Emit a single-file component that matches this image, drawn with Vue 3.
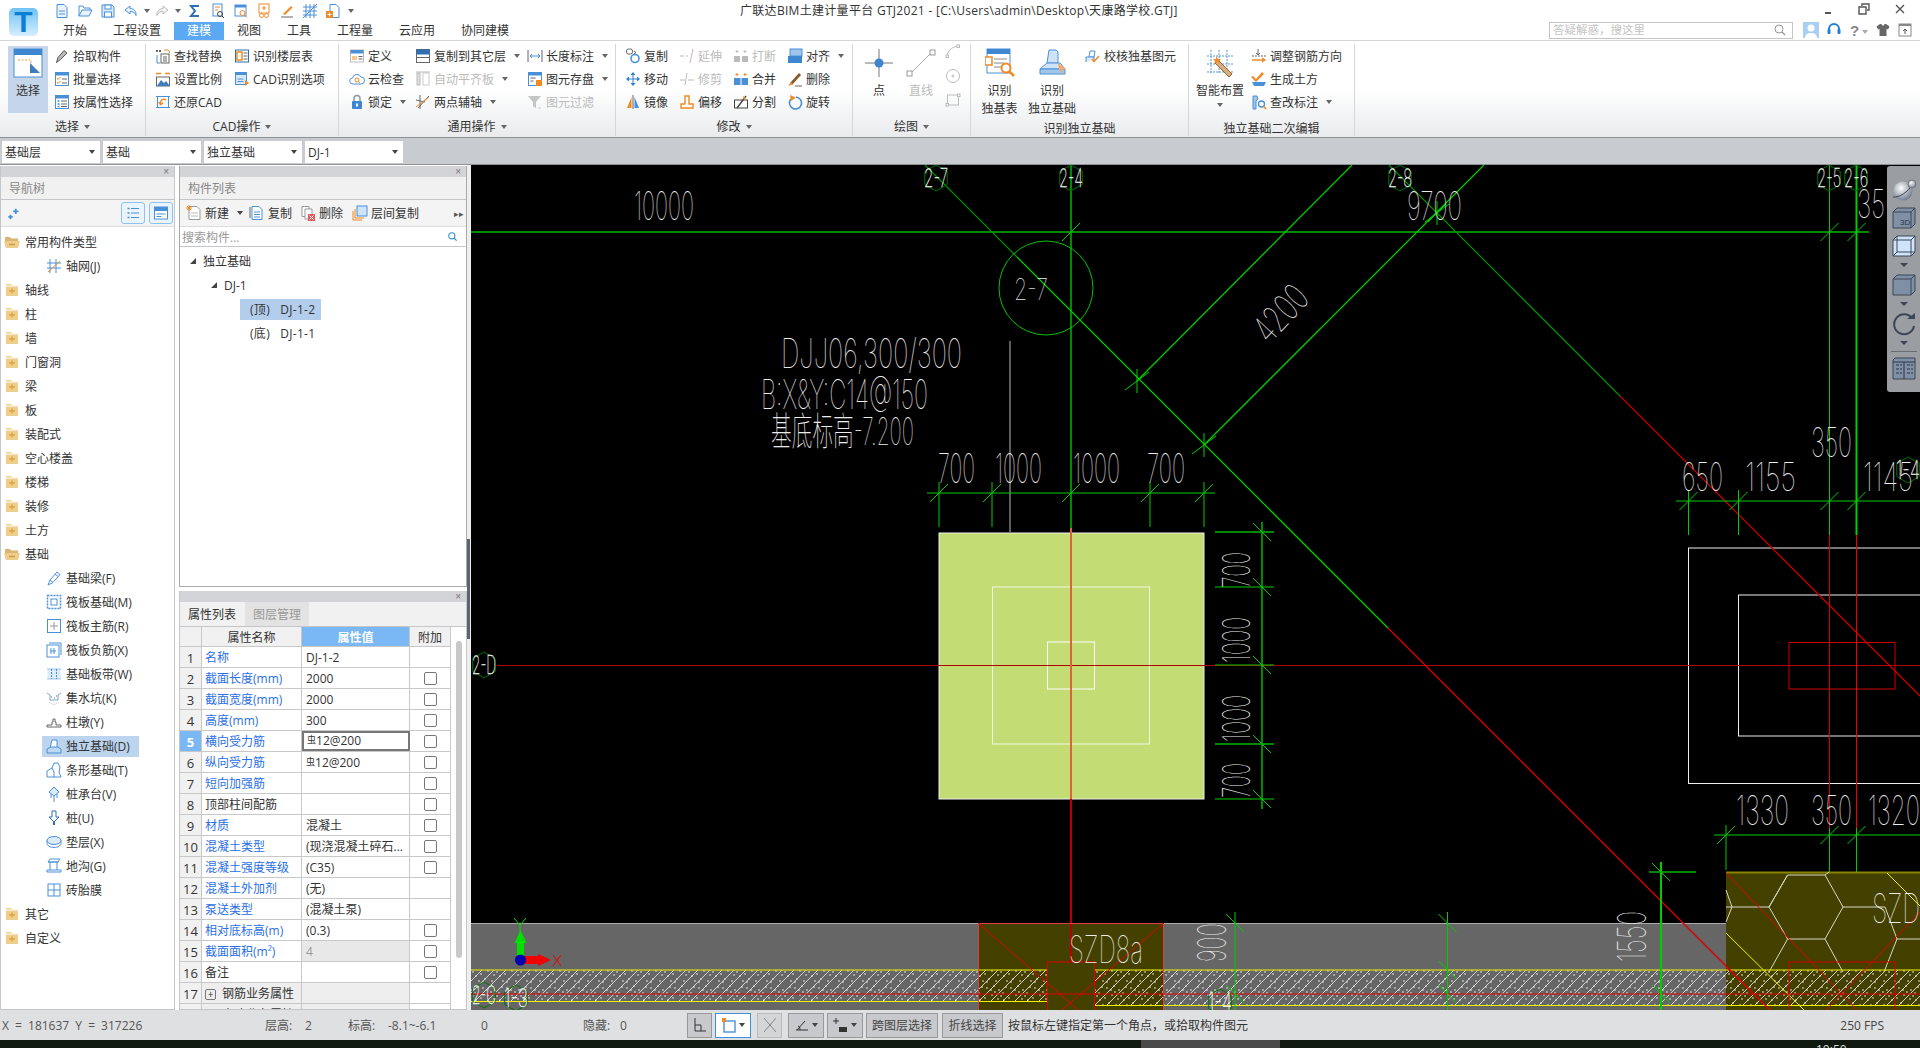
<script setup>
const B = "#4a90d9";
const O = "#f08a24";
const G = "#666";
const D = "#444";

const win = (h = "") =>
  `<rect x="1.5" y="1.5" width="13" height="13" fill="#fff" stroke="${B}"/><rect x="1.5" y="1.5" width="13" height="3" fill="${B}"/>${h}`;

const icons = {
  file: `<path d="M3 1.5h7l3 3v10H3z" fill="#eaf3fc" stroke="${B}"/><path d="M5 8h6M5 11h6" stroke="${B}"/>`,
  open: `<path d="M2 13V3h4l1 2h6v2" fill="none" stroke="${B}"/><path d="M2 13l3-6h10l-3 6z" fill="#eaf3fc" stroke="${B}"/>`,
  disk: `<path d="M2 2h10l2 2v10H2z" fill="#dcebf9" stroke="${B}"/><rect x="5" y="2" width="6" height="4" fill="#fff" stroke="${B}"/><rect x="4.5" y="9" width="7" height="5" fill="#fff" stroke="${B}"/>`,
  undo: `<path d="M7 3L2 7l5 4V8.5c3 0 5 1 6 4 .5-4-2-7-6-7z" fill="#eaf3fc" stroke="${B}"/>`,
  redo: `<path d="M9 3l5 4-5 4V8.5c-3 0-5 1-6 4-.5-4 2-7 6-7z" fill="#f4f4f4" stroke="#bbb"/>`,
  sigma: `<path d="M12 3H4l4 5-4 5h8" fill="none" stroke="#2f6fb5" stroke-width="2"/>`,
  calc: `<rect x="3" y="1" width="9" height="12" fill="#fff" stroke="${B}"/><path d="M5 4h5M5 7h3" stroke="${O}"/><circle cx="10" cy="11" r="2.5" fill="none" stroke="${D}"/><path d="M12 13l2 2" stroke="${D}"/>`,
  calc2: `<rect x="2" y="2" width="11" height="11" fill="#fff" stroke="${B}"/><rect x="2" y="2" width="11" height="2.5" fill="${B}"/><circle cx="9.5" cy="10" r="2.5" fill="none" stroke="${O}"/><path d="M11.5 12l2.5 2.5" stroke="${O}"/>`,
  glass: `<rect x="3" y="1" width="10" height="9" fill="#fff" stroke="${O}"/><path d="M6 5h4M8 3v4" stroke="${O}"/><circle cx="5.5" cy="12.5" r="2" fill="none" stroke="${O}"/><circle cx="10.5" cy="12.5" r="2" fill="none" stroke="${O}"/>`,
  brush: `<path d="M4 11L12 3l1.5 1.5L6 12z" fill="${O}"/><path d="M2 14h12" stroke="${G}"/>`,
  grid: `<path d="M4 1v14M8 1v14M12 1v14M1 4h14M1 8h14M1 12h14" stroke="${B}" fill="none"/><path d="M1 15L15 1" stroke="${B}"/>`,
  addf: `<path d="M5 1.5h6l3 3v10H5z" fill="#fff" stroke="${B}"/><rect x="1" y="8" width="7" height="7" fill="${O}"/><path d="M2.5 11.5h4M4.5 9.5v4" stroke="#fff"/>`,

  pick: `<path d="M2.5 14.5l1.5-5 6-7 3 2.5-6.5 6.5z" fill="#bbb" stroke="#555"/>`,
  batch: win(`<path d="M3 7l1 1.5L6.5 6M3 11l1 1.5L6.5 10" fill="none" stroke="${O}"/><path d="M8 8h5M8 12h5" stroke="${G}"/>`),
  attr: win(`<path d="M3.5 7h2M3.5 10h2M3.5 12.5h2" stroke="${B}" stroke-width="1.4"/><path d="M7 7h6M7 10h6M7 12.5h6" stroke="${G}"/>`),
  find: `<path d="M1 3h6" stroke="${G}" stroke-dasharray="2 1" stroke-width="2"/><path d="M9 2h4l2 2-1.5 1" fill="none" stroke="${O}"/><rect x="6" y="6" width="8" height="9" fill="#fff" stroke="${G}"/><path d="M8 9h4M8 11h4M8 13h4" stroke="${G}"/><path d="M2 7v8h3" fill="none" stroke="${B}"/>`,
  scale: `<path d="M1 2.5h5M10 2.5h5" stroke="${O}" stroke-width="1.5"/><rect x="1.5" y="6" width="13" height="9" fill="#fff" stroke="${G}"/><path d="M2 15l4-6 3 3 2-2 4 5z" fill="#3f7dc0"/>`,
  restore: `<rect x="2.5" y="2.5" width="11" height="11" fill="none" stroke="${B}"/><path d="M1 2.5h3M12 2.5h3M1 13.5h3M12 13.5h3" stroke="${B}"/><path d="M11 6C8 4 5 6 5.5 10M4 8l1.5 2.5L8 9" fill="none" stroke="${O}" stroke-width="1.5"/>`,
  floors: `<rect x="1.5" y="2" width="13" height="12" fill="#fff" stroke="#2f6fb5"/><rect x="3" y="4" width="5" height="8" fill="none" stroke="${O}" stroke-width="1.5"/><path d="M9.5 5h4M9.5 8h4M9.5 11h4" stroke="${G}"/>`,
  cadopt: `<rect x="1.5" y="1.5" width="11" height="12" fill="#d9e8f7" stroke="${B}"/><rect x="1.5" y="1.5" width="11" height="2.5" fill="${B}"/><path d="M11 9l4 3-4 3z" fill="${O}"/><path d="M3.5 8h6M3.5 10.5h6" stroke="${B}"/>`,
  define: `<rect x="1.5" y="2" width="13" height="12" fill="#fff" stroke="#bbb"/><rect x="1.5" y="2" width="13" height="3.5" fill="${B}"/><rect x="3" y="8" width="5" height="4" fill="#f7c98b"/><path d="M9.5 8.5h4M9.5 11h4" stroke="${G}"/>`,
  cloud: `<path d="M4 13a3 3 0 0 1-.5-6A4.5 4.5 0 0 1 12 6a3.5 3.5 0 0 1 0 7z" fill="#fff" stroke="${B}"/><circle cx="8" cy="9" r="2" fill="none" stroke="${O}"/><path d="M9.5 10.5l1.5 1.5" stroke="${O}"/>`,
  lock: `<rect x="3" y="7" width="10" height="8" rx="1" fill="#3f86d0"/><path d="M5 7V4.5a3 3 0 0 1 6 0V7" fill="none" stroke="#8a9aaa" stroke-width="1.5"/><rect x="7" y="9.5" width="2" height="3" fill="#fff"/>`,
  copyto: `<rect x="1.5" y="1.5" width="13" height="13" fill="#fff" stroke="${G}"/><rect x="1.5" y="1.5" width="13" height="5" fill="#2f6fb5"/><path d="M1.5 9.5h13" stroke="${G}"/>`,
  alignp: `<rect x="2" y="2" width="3" height="12" fill="#ddd" stroke="#bbb"/><rect x="8" y="2" width="6" height="12" fill="none" stroke="#ccc"/><path d="M1 1h14" stroke="#bbb"/>`,
  twopt: `<path d="M3 14L14 2M1 6l9 2M5 1v14" stroke="${G}" fill="none"/><path d="M1 13L14 3" stroke="${O}"/>`,
  dimlen: `<path d="M1 2v12M15 2v12" stroke="${G}"/><path d="M3 8h10M5 6L3 8l2 2M11 6l2 2-2 2" fill="none" stroke="${B}"/>`,
  saved: `<rect x="1.5" y="1.5" width="13" height="13" fill="#fff" stroke="${B}"/><rect x="1.5" y="1.5" width="13" height="3" fill="${B}"/><path d="M3.5 7h5M3.5 10h3" stroke="${G}"/><rect x="9" y="9" width="6" height="6" fill="${O}"/>`,
  filter: `<path d="M1 2h13L9 8v6l-3-1.5V8z" fill="#c5c5c5"/><path d="M11 14h3" stroke="#ccc"/>`,
  copy: `<circle cx="10" cy="10.5" r="4" fill="none" stroke="${B}" stroke-width="1.6"/><rect x="1.5" y="1" width="6" height="5" rx="2" fill="none" stroke="${G}"/><path d="M9 3l2 1.5L9 6" fill="none" stroke="${G}"/>`,
  move: `<path d="M8 1l2.5 3h-5zM8 15l2.5-3h-5zM1 8l3-2.5v5zM15 8l-3-2.5v5z" fill="#2f7fd0"/><path d="M4 8h8M8 4v8" stroke="#2f7fd0"/>`,
  mirror: `<path d="M6.5 3L2 14h4.5z" fill="${O}"/><path d="M9.5 3L14 14H9.5z" fill="${B}"/><path d="M8 1v14" stroke="${G}"/>`,
  extend: `<path d="M1 8h4M7 8h2M14 1L11 15" stroke="#bbb" fill="none"/>`,
  trim: `<path d="M1 9h5M9 9h6M8 2l-2 12" stroke="#bbb" fill="none"/>`,
  offset: `<path d="M6 2h4v8h4v4H2v-4h4z" fill="#fff" stroke="${O}" stroke-width="1.4"/>`,
  brk: `<path d="M4 2v3M2.5 3.5h3M12 2v3M10.5 3.5h3" stroke="#bbb"/><rect x="1" y="8" width="6" height="6" fill="#bbb"/><rect x="9" y="8" width="6" height="6" fill="#bbb"/>`,
  merge: `<path d="M4 2v3M2.5 3.5h3M12 2v3M10.5 3.5h3" stroke="${O}"/><rect x="1" y="7" width="14" height="7" fill="${B}"/><path d="M8 7v7" stroke="#fff"/>`,
  split: `<rect x="1.5" y="6" width="13" height="8" fill="#fff" stroke="${D}"/><path d="M4 14l9-12" stroke="${D}" stroke-width="1.4"/><path d="M10 2l3 2-2 3z" fill="${O}"/>`,
  alignr: `<rect x="3" y="1" width="12" height="7" fill="#9fc5ea" stroke="${B}"/><rect x="1" y="8" width="14" height="7" fill="#3f86d0"/>`,
  del: `<path d="M3 12L12 2l2 2-9 10z" fill="#8a5a2b"/><path d="M1 15l3-4 2 2z" fill="${O}"/><path d="M8 15h7" stroke="${G}"/>`,
  rotate: `<path d="M9 3a6 6 0 1 1-5 2" fill="none" stroke="${B}" stroke-width="1.6"/><path d="M3 1l6 2.5L4 7z" fill="${O}"/>`,
  arcs: `<path d="M2 14c0-7 4-11 12-12" fill="none" stroke="#bbb"/><rect x="1" y="11" width="2.5" height="2.5" fill="#fff" stroke="#bbb"/><rect x="12" y="1" width="2.5" height="2.5" fill="#fff" stroke="#bbb"/>`,
  circ: `<circle cx="8" cy="8" r="6.5" fill="none" stroke="#bbb"/><circle cx="8" cy="8" r="1" fill="none" stroke="#bbb"/>`,
  rects: `<rect x="2.5" y="3" width="11" height="10" fill="none" stroke="#bbb"/><rect x="1" y="11.5" width="2.5" height="2.5" fill="#fff" stroke="#bbb"/><rect x="12.5" y="2" width="2.5" height="2.5" fill="#fff" stroke="#bbb"/>`,
  verify: `<path d="M5 3h5l-1 6H4z" fill="#fff" stroke="${B}"/><path d="M1 14V9h8v3" fill="#dcebf9" stroke="${B}"/><path d="M7 11l2 2.5L14 8" fill="none" stroke="${O}" stroke-width="1.5"/>`,
  adj: `<path d="M7 1v6M5 5l2 2 2-2" fill="none" stroke="${G}"/><path d="M1 8h14" stroke="${G}" stroke-dasharray="2 1"/><path d="M1 12h13M11 10l3 2-3 2" fill="none" stroke="${O}" stroke-width="1.3"/>`,
  earth: `<path d="M2 5l3 3 6-7 2 2-8 8-5-5z" fill="${O}"/><path d="M1 11h14l-2 4H3z" fill="${B}"/>`,
  mark: `<path d="M2 15V2h4l1 3-2 2v8z" fill="#9fc5ea" stroke="${B}"/><circle cx="10.5" cy="10" r="3" fill="none" stroke="${B}" stroke-width="1.3"/><path d="M12.5 12l2.5 3" stroke="${O}" stroke-width="1.5"/>`,

  sparkle: `<path d="M4 10v5M1.5 12.5h5M10 3v6M7 6h6" stroke="${B}" stroke-width="2"/>`,
  axis: `<path d="M4 1v14M10 1v14M1 5h14M1 10h14" stroke="${B}"/><path d="M2 14L14 3" stroke="${O}"/>`,
  beam: `<path d="M2 15l2-5L11 2l3 2.5-7 8z" fill="#fff" stroke="${B}"/><path d="M4 10l3 2.5M9 4l3 2.5" stroke="${B}"/>`,
  raft: `<rect x="1.5" y="1.5" width="13" height="13" fill="none" stroke="${B}" stroke-dasharray="2 1" stroke-width="1.5"/><rect x="5" y="5" width="6" height="6" fill="#fff" stroke="${B}"/>`,
  raftm: `<rect x="1.5" y="1.5" width="13" height="13" fill="#fff" stroke="${B}"/><path d="M8 4v8M4 8h8" stroke="#999"/>`,
  raftn: `<rect x="1" y="3" width="12" height="12" fill="#fff" stroke="${B}"/><path d="M3 1h12v12" fill="none" stroke="${B}"/><path d="M5 6v6M8 6v6M4 9h6" stroke="${B}"/>`,
  strip: `<rect x="1.5" y="3" width="13" height="10" fill="#dcebf9"/><path d="M5.5 3v10M10.5 3v10" stroke="${B}" stroke-dasharray="2 1"/><path d="M1 3h14M1 13h14" stroke="${B}" stroke-width=".5"/>`,
  pit: `<path d="M1 3l3 2v5h8V5l3-2" fill="none" stroke="#7aa6d6"/><path d="M3 12c3 3 7 3 10 0" fill="none" stroke="#bbb" stroke-dasharray="1 1"/><path d="M5 7h1M8 8h1M10 6h1" stroke="${G}"/>`,
  pier: `<path d="M1 13h14v-2H10V8H9V5H7v3H6v3H1z" fill="#fff" stroke="${G}"/>`,
  iso: `<path d="M6 2h5v8H4z" fill="#fff" stroke="${B}"/><path d="M1 15v-4l4-2h7l3 2v4z" fill="#bcd8f2" stroke="${B}"/>`,
  stripf: `<path d="M1 15V9l5-3 2-5h4l2 4-1 5 2 5z" fill="#fff" stroke="${B}"/><path d="M6 6l2 4v5" fill="none" stroke="${B}"/>`,
  cap: `<path d="M3 6l5-5 5 5-5 4z" fill="#dcebf9" stroke="${B}"/><path d="M8 10v6M5 8v4M11 8v4" stroke="${B}"/>`,
  pile: `<path d="M6 1h4v6h3l-5 5-5-5h3z" fill="#fff" stroke="#2f6fb5"/><path d="M8 12v3" stroke="#2f6fb5" stroke-width="2"/>`,
  pad: `<ellipse cx="8" cy="6.5" rx="7" ry="4" fill="#dcebf9" stroke="${B}"/><path d="M1 6.5v3c0 2 3 4 7 4s7-2 7-4v-3" fill="none" stroke="${B}"/>`,
  trench: `<path d="M2 4l2-3h10l-2 3zM1 14h14v-2H1zM4 4v8M11 4v8M2 4h10" fill="none" stroke="${B}"/>`,
  brick: `<rect x="2" y="2" width="12" height="12" fill="#fff" stroke="${B}"/><path d="M8 2v12M2 8h12" stroke="${B}"/>`,

  bnew: `<path d="M3 1.5h8l3 3v10H3z" fill="#fff" stroke="#999"/><path d="M5 8h7M5 11h7" stroke="#bbb"/><path d="M1 1l4 4M5 1L1 5M3 0v6M0 3h6" stroke="${O}"/>`,
  bcopy: `<path d="M1 2v11" stroke="${G}"/><path d="M3 1.5h7l3 3v10H3z" fill="#fff" stroke="${B}"/><path d="M5 7h6M5 9.5h6M5 12h6" stroke="${B}"/>`,
  bdel: `<path d="M2 1.5h7v10H2z" fill="#fff" stroke="#999"/><path d="M5 4h7v10H5z" fill="#fff" stroke="#999"/><rect x="8" y="9" width="7" height="7" fill="#e05a5a"/><path d="M9.5 10.5l4 4M13.5 10.5l-4 4" stroke="#fff"/>`,
  bfloor: `<rect x="5" y="1" width="10" height="10" fill="#cfe3f7" stroke="${B}"/><path d="M3 4v9h9M1 6v9h9" fill="none" stroke="${O}"/>`,
  search: `<circle cx="7" cy="7" r="4.5" fill="none" stroke="#2f8fc8" stroke-width="1.6"/><path d="M10 10l4 4" stroke="#2f8fc8" stroke-width="2"/>`,
  fopen: `<path d="M1 13V3h5l1 1.5h7V7H4z" fill="#d9b470"/><path d="M0 7h16l-2 7H2z" fill="#efcd8a"/><path d="M5 10.5h6" stroke="#c9a050" stroke-width="1.6"/>`,
  fclosed: `<path d="M2 2h5l1 1.5h6V14H2z" fill="#efcd8a"/><path d="M2 4h12" stroke="#fff"/><path d="M5 9h6M8 6.5v5" stroke="#d8a850" stroke-width="1.6"/>`,

  cellview: `<rect x="1" y="1" width="14" height="14" fill="none"/><path d="M2.5 3.5h2M2.5 8h2M2.5 12.5h2" stroke="${B}" stroke-width="1.5"/><path d="M6 3.5h8M6 8h8M6 12.5h8" stroke="${B}"/>`,
  formview: `<rect x="1.5" y="2" width="13" height="12" fill="#fff" stroke="${B}"/><rect x="1.5" y="2" width="13" height="4" fill="${B}"/><path d="M3.5 9h9M3.5 11.5h5" stroke="${B}"/>`,

  s1: `<path d="M3 1v13h11M3 8h6v6" fill="none" stroke="#333"/>`,
  s2: `<rect x="3" y="4" width="11" height="11" fill="none" stroke="${B}" stroke-width="1.4"/><rect x="1" y="1" width="4" height="4" fill="${O}"/>`,
  s3: `<path d="M2 1l12 14M14 1L2 15" stroke="#888"/>`,
  s4: `<path d="M2 13h12M3 13l8-9M6 13c0-3-1-4-2-4" fill="none" stroke="#333"/>`,
  s5: `<path d="M3 1v6M0 4h6" stroke="#333"/><rect x="6" y="10" width="8" height="5" fill="#333"/>`,
};

const quick = [
  { i: "file", w: 23 }, { i: "open", w: 23 }, { i: "disk", w: 23 }, { i: "undo", w: 23 },
  { a: 1, w: 9 }, { i: "redo", w: 21, off: 1 }, { a: 1, w: 11 },
  { i: "sigma", w: 23 }, { i: "calc", w: 23 }, { i: "calc2", w: 23 }, { i: "glass", w: 23 },
  { i: "brush", w: 23 }, { i: "grid", w: 23 }, { i: "addf", w: 23 }, { a: 1, w: 13 },
];

const tabs = ["开始", "工程设置", "建模", "视图", "工具", "工程量", "云应用", "协同建模"];

const groups = [
  {
    label: "选择", width: 146, pad: 8, arrow: true,
    bigs: [{ i: "select", text: ["选择"], w: 40, active: true, mr: 6 }],
    cols: [{ w: 80, items: [{ i: "pick", t: "拾取构件" }, { i: "batch", t: "批量选择" }, { i: "attr", t: "按属性选择" }] }],
  },
  {
    label: "CAD操作", width: 193, pad: 9, arrow: true,
    cols: [
      { w: 79, items: [{ i: "find", t: "查找替换" }, { i: "scale", t: "设置比例" }, { i: "restore", t: "还原CAD" }] },
      { w: 95, items: [{ i: "floors", t: "识别楼层表" }, { i: "cadopt", t: "CAD识别选项" }] },
    ],
  },
  {
    label: "通用操作", width: 277, pad: 10, arrow: true,
    cols: [
      { w: 66, items: [{ i: "define", t: "定义" }, { i: "cloud", t: "云检查" }, { i: "lock", t: "锁定", a: 1 }] },
      { w: 112, items: [{ i: "copyto", t: "复制到其它层", a: 1 }, { i: "alignp", t: "自动平齐板", a: 1, off: 1 }, { i: "twopt", t: "两点辅轴", a: 1 }] },
      { w: 85, items: [{ i: "dimlen", t: "长度标注", a: 1 }, { i: "saved", t: "图元存盘", a: 1 }, { i: "filter", t: "图元过滤", off: 1 }] },
    ],
  },
  {
    label: "修改", width: 237, pad: 9, arrow: true,
    cols: [
      { w: 54, items: [{ i: "copy", t: "复制" }, { i: "move", t: "移动" }, { i: "mirror", t: "镜像" }] },
      { w: 54, items: [{ i: "extend", t: "延伸", off: 1 }, { i: "trim", t: "修剪", off: 1 }, { i: "offset", t: "偏移" }] },
      { w: 54, items: [{ i: "brk", t: "打断", off: 1 }, { i: "merge", t: "合并" }, { i: "split", t: "分割" }] },
      { w: 62, items: [{ i: "alignr", t: "对齐", a: 1 }, { i: "del", t: "删除" }, { i: "rotate", t: "旋转" }] },
    ],
  },
  {
    label: "绘图", width: 118, pad: 5, arrow: true,
    bigs: [
      { i: "point", text: ["点"], w: 42 },
      { i: "line", text: ["直线"], w: 42, off: true, mr: 3 },
    ],
    cols: [{ w: 20, icons: ["arcs", "circ", "rects"] }],
  },
  {
    label: "识别独立基础", width: 218, pad: 0, low: true,
    bigs: [
      { i: "tablescan", text: ["识别", "独基表"], w: 57 },
      { i: "foundscan", text: ["识别", "独立基础"], w: 48, mr: 9 },
    ],
    cols: [{ w: 100, items: [{ i: "verify", t: "校核独基图元" }] }],
  },
  {
    label: "独立基础二次编辑", width: 166, pad: 0, low: true,
    bigs: [{ i: "smart", text: ["智能布置"], w: 62, drop: true }],
    cols: [{ w: 104, items: [{ i: "adj", t: "调整钢筋方向" }, { i: "earth", t: "生成土方" }, { i: "mark", t: "查改标注", a: 1 }] }],
  },
];

const combos = ["基础层", "基础", "独立基础", "DJ-1"];

const navTree = [
  { t: "常用构件类型", open: true, kids: [{ i: "axis", t: "轴网(J)" }] },
  { t: "轴线" }, { t: "柱" }, { t: "墙" }, { t: "门窗洞" }, { t: "梁" }, { t: "板" },
  { t: "装配式" }, { t: "空心楼盖" }, { t: "楼梯" }, { t: "装修" }, { t: "土方" },
  {
    t: "基础", open: true,
    kids: [
      { i: "beam", t: "基础梁(F)" }, { i: "raft", t: "筏板基础(M)" }, { i: "raftm", t: "筏板主筋(R)" },
      { i: "raftn", t: "筏板负筋(X)" }, { i: "strip", t: "基础板带(W)" }, { i: "pit", t: "集水坑(K)" },
      { i: "pier", t: "柱墩(Y)" }, { i: "iso", t: "独立基础(D)", on: true }, { i: "stripf", t: "条形基础(T)" },
      { i: "cap", t: "桩承台(V)" }, { i: "pile", t: "桩(U)" }, { i: "pad", t: "垫层(X)" },
      { i: "trench", t: "地沟(G)" }, { i: "brick", t: "砖胎膜" },
    ],
  },
  { t: "其它" }, { t: "自定义" },
];

const listTools = [
  { i: "bnew", t: "新建", a: 1, w: 63 },
  { i: "bcopy", t: "复制", w: 51 },
  { i: "bdel", t: "删除", w: 52 },
  { i: "bfloor", t: "层间复制", w: 90 },
];

const props = [
  { n: "名称", v: "DJ-1-2", blue: 1 },
  { n: "截面长度(mm)", v: "2000", blue: 1, c: 1 },
  { n: "截面宽度(mm)", v: "2000", blue: 1, c: 1 },
  { n: "高度(mm)", v: "300", blue: 1, c: 1 },
  { n: "横向受力筋", v: "12@200", bar: 1, blue: 1, c: 1, cur: 1 },
  { n: "纵向受力筋", v: "12@200", bar: 1, blue: 1, c: 1 },
  { n: "短向加强筋", v: "", blue: 1, c: 1 },
  { n: "顶部柱间配筋", v: "", c: 1 },
  { n: "材质", v: "混凝土", blue: 1, c: 1 },
  { n: "混凝土类型", v: "(现浇混凝土碎石...", blue: 1, c: 1 },
  { n: "混凝土强度等级", v: "(C35)", blue: 1, c: 1 },
  { n: "混凝土外加剂", v: "(无)", blue: 1 },
  { n: "泵送类型", v: "(混凝土泵)", blue: 1 },
  { n: "相对底标高(m)", v: "(0.3)", blue: 1, c: 1 },
  { n: "截面面积(m²)", v: "4", blue: 1, c: 1, ro: 1 },
  { n: "备注", v: "", c: 1 },
  { n: "钢筋业务属性", v: "", sec: 1 },
  { n: "土建业务属性", v: "", sec: 1 },
];

const stats = [
  { t: "X = 181637 Y = 317226", w: 263 },
  { t: "层高:", w: 40 },
  { t: "2", w: 43 },
  { t: "标高:", w: 40 },
  { t: "-8.1~-6.1", w: 93 },
  { t: "0", w: 102 },
  { t: "隐藏:", w: 37 },
  { t: "0", w: 67 },
];

const statBtns = [
  { i: "s1", w: 25, mr: 3 },
  { i: "s2", w: 36, a: 1, on: 1, mr: 6 },
  { i: "s3", w: 25, off: 1, mr: 6 },
  { i: "s4", w: 36, a: 1, mr: 3 },
  { i: "s5", w: 36, a: 1, mr: 3 },
];

// CAD drawing data, in page coordinates
const GB = "#00cc00";
const GD = "#008a00";
const RD = "#d80000";

const lines = [
  [471, 232, 1869, 232, GD, 2],
  [1071, 165, 1071, 528, GD, 2],
  [925, 165, 1017, 257, GD, 1.3],
  [1017, 257, 1388, 628, GB, 1.3],
  [1388, 628, 1770, 1010, RD, 1.4],
  [1389, 165, 1620, 396, GD, 1.3],
  [1620, 396, 1920, 696, "#c00000", 1.3],
  [1137, 381, 1352, 165, GB, 1.3],
  [1204, 445, 1484, 165, GB, 1.3],
  [1010, 341, 1010, 532, "#bbb", 1],
  [927, 493, 1215, 493, GB, 1],
  [939, 482, 939, 527, GB, 1],
  [992, 482, 992, 527, GB, 1],
  [1150, 482, 1150, 527, GB, 1],
  [1204, 482, 1204, 527, GB, 1],
  [1262, 522, 1262, 809, GD, 2],
  [1215, 532, 1274, 532, GD, 2],
  [1215, 587, 1274, 587, GB, 1],
  [1215, 665, 1274, 665, GB, 1],
  [1215, 744, 1274, 744, GD, 2],
  [1215, 799, 1274, 799, GB, 1],
  [1829.5, 165, 1829.5, 535, GB, 1],
  [1856.5, 165, 1856.5, 535, GB, 2],
  [1829.5, 535, 1829.5, 828, RD, 1],
  [1856.5, 535, 1856.5, 828, "#f00000", 1],
  [1829.5, 828, 1829.5, 872, GB, 1],
  [1856.5, 828, 1856.5, 872, GB, 1],
  [1676, 501, 1920, 501, GB, 1],
  [1688.5, 490, 1688.5, 535, GB, 1],
  [1738.5, 490, 1738.5, 535, GB, 1],
  [1714, 835, 1920, 835, GB, 1],
  [1726, 825, 1726, 870, GB, 1],
  [1447.5, 912, 1447.5, 1010, GB, 1],
  [1235, 912, 1235, 1010, GB, 1],
  [1661, 862, 1661, 1010, GB, 2],
  [1649, 872, 1696, 872, GD, 2],
];

const ticksUp = [
  [1071, 232], [939, 493], [992, 493], [1071, 493], [1150, 493], [1204, 493],
  [1829.5, 232], [1856.5, 232], [1688.5, 501], [1738.5, 501], [1829.5, 501], [1856.5, 501],
  [1726, 835], [1829.5, 835], [1856.5, 835], [1437, 213],
];
const ticksDown = [
  [1262, 532], [1262, 587], [1262, 665], [1262, 744], [1262, 799],
  [1447.5, 923], [1447.5, 970], [1447.5, 994], [1235, 923], [1235, 994],
  [1661, 872], [1661, 994],
];
const stars = [[1137, 381], [1204, 445], [1437, 213]];

const hexes = [
  [936, 178, "2-7"], [1071, 178, "2-4"], [1400, 178, "2-8"], [1829, 178, "2-5"], [1856, 178, "2-6"],
  [484, 665, "2-D"], [484, 995, "2-C"], [516, 998, "1-3"], [1220, 1002, "1-4"], [1908, 470, "1-4"],
];
const hexPoints = (x, y, r = 13) =>
  [0, 1, 2, 3, 4, 5]
    .map((k) => {
      const a = (Math.PI / 3) * k - Math.PI / 2;
      return `${x + r * Math.cos(a)},${y + r * Math.sin(a)}`;
    })
    .join(" ");

// [text, x, baseline y, width, cap height, rotation]
const cadText = [
  ["10000", 634, 220, 60, 29],
  ["9700", 1407, 220, 55, 29],
  ["35", 1857, 218, 28, 29],
  ["4200", 1269, 345, 62, 27, -47],
  ["2-7", 1014, 300, 34, 22],
  ["DJJ06,300/300", 781, 368, 181, 30],
  ["B:X&Y:C14@150", 761, 409, 167, 30],
  ["基底标高-7.200", 771, 445, 143, 28],
  ["700", 938, 483, 37, 30],
  ["1000", 995, 483, 47, 30],
  ["1000", 1073, 483, 47, 30],
  ["700", 1147, 483, 38, 30],
  ["700", 1250, 588, 36, 28, -90],
  ["1000", 1250, 663, 46, 28, -90],
  ["1000", 1250, 742, 47, 28, -90],
  ["700", 1250, 798, 35, 28, -90],
  ["650", 1682, 491, 41, 29],
  ["1155", 1745, 491, 51, 29],
  ["350", 1811, 457, 41, 30],
  ["1145", 1863, 491, 50, 29],
  ["1330", 1736, 825, 53, 30],
  ["350", 1811, 825, 41, 30],
  ["1320", 1868, 825, 52, 30],
  ["SZD8a", 1069, 963, 74, 28],
  ["SZD", 1872, 923, 48, 30],
  ["900", 1226, 962, 39, 29, -90],
  ["1550", 1646, 962, 51, 29, -90],
];

const hexLines = [
  "M1787.6 875H1825L1843 907L1825 939H1787.6L1769 907Z",
  "M1726 907H1769M1843 907H1872",
  "M1787.6 875L1769 907M1787.6 939L1769 972M1825 939L1843 972M1825 875L1829 872",
  "M1897 939H1920M1897 939L1884 972M1897 939L1885 907H1872",
  "M1726 890L1732 907L1726 922",
];

const speckle = [
  [3, 4], [8, 11], [15, 6], [20, 16], [5, 19], [12, 21], [22, 3], [17, 12], [1, 14], [10, 2],
  [7, 6], [14, 15], [19, 9], [3, 22], [23, 21], [11, 8],
];
</script>

<template>
  <div class="app">
    <header class="head">
      <div class="logo-cell">
        <div class="logo"><span class="logo-t">T</span></div>
      </div>
      <div class="head-main">
        <div class="qa-row">
          <div class="qa">
            <template v-for="(q, k) in quick" :key="k">
              <span v-if="q.a" class="qa-arrow" :style="{ width: q.w + 'px' }"><i class="caret"></i></span>
              <span v-else class="qa-btn" :style="{ width: q.w + 'px' }">
                <svg class="ico" viewBox="0 0 16 16" v-html="icons[q.i]"></svg>
              </span>
            </template>
          </div>
          <div class="title">广联达BIM土建计量平台 GTJ2021 - [C:\Users\admin\Desktop\天康路学校.GTJ]</div>
          <div class="winctl">
            <svg width="14" height="14" viewBox="0 0 14 14"><path d="M4 10h6" stroke="#555" stroke-width="2" /></svg>
            <svg width="14" height="14" viewBox="0 0 14 14"><path d="M5 3V1h7v6h-2M2 4h7v7H2z" fill="none" stroke="#555" stroke-width="1.4" /></svg>
            <svg width="14" height="14" viewBox="0 0 14 14"><path d="M3 2l8 8M11 2l-8 8" stroke="#555" stroke-width="1.4" /></svg>
          </div>
        </div>
        <div class="tab-row">
          <div class="tabs">
            <div v-for="t in tabs" :key="t" class="tab" :class="{ on: t === '建模' }">{{ t }}</div>
          </div>
          <div class="head-right">
            <div class="ask">
              <span>答疑解惑，搜这里</span>
              <svg width="12" height="12" viewBox="0 0 12 12"><circle cx="5" cy="5" r="4" fill="none" stroke="#999" /><path d="M8 8l3 3" stroke="#999" stroke-width="1.4" /></svg>
            </div>
            <svg class="hr-ico" width="16" height="16" viewBox="0 0 16 16"><rect width="16" height="16" fill="#a8d0f5" /><circle cx="8" cy="6" r="3.5" fill="#fff" /><path d="M2 16c0-4 3-5 6-5s6 1 6 5z" fill="#fff" /></svg>
            <svg class="hr-ico" width="14" height="14" viewBox="0 0 14 14"><path d="M2 8V6a5 5 0 0 1 10 0v2" fill="none" stroke="#1f7fd8" stroke-width="2" /><rect x="0.5" y="6" width="3" height="5" rx="1" fill="#1f7fd8" /><rect x="10.5" y="6" width="3" height="5" rx="1" fill="#1f7fd8" /></svg>
            <span class="help">?<i class="caret lite"></i></span>
            <svg class="hr-ico" width="14" height="14" viewBox="0 0 14 14"><path d="M4 1L0.5 3.5l1.5 3 1.5-.8V13h7V5.7l1.5.8 1.5-3L10 1H8.5a1.5 1.5 0 0 1-3 0z" fill="#666" /></svg>
            <svg class="hr-ico" width="14" height="14" viewBox="0 0 14 14"><rect x="1" y="1" width="12" height="12" fill="#fff" stroke="#888" /><rect x="1" y="1" width="12" height="2" fill="#888" /><path d="M7 11V6M5 8l2-2 2 2" fill="none" stroke="#555" /></svg>
          </div>
        </div>
      </div>
    </header>

    <section class="ribbon">
      <div v-for="g in groups" :key="g.label" class="rgroup" :style="{ width: g.width + 'px' }">
        <div class="rbody" :style="{ paddingLeft: g.pad + 'px' }">
          <div
            v-for="b in g.bigs || []"
            :key="b.i"
            class="big"
            :class="{ active: b.active, off: b.off }"
            :style="{ width: b.w + 'px', marginRight: (b.mr || 0) + 'px' }"
          >
            <svg class="big-ico" viewBox="0 0 30 30">
              <template v-if="b.i === 'select'">
                <rect x="1" y="1" width="28" height="28" fill="#fff" stroke="#4a90d9" />
                <rect x="1" y="1" width="28" height="6" fill="#3f86d0" />
                <path d="M5 12h13v12" fill="none" stroke="#f0a030" stroke-dasharray="2 1.5" />
                <path d="M17 15l10 10H17z" fill="#3f7dc0" />
              </template>
              <template v-else-if="b.i === 'point'">
                <path d="M15 1v28M1 15h28" stroke="#777" />
                <circle cx="15" cy="15" r="4.5" fill="#3f86d0" />
              </template>
              <template v-else-if="b.i === 'line'">
                <path d="M4 26L26 4" stroke="#aaa" />
                <rect x="1" y="23" width="5" height="5" fill="#fff" stroke="#999" />
                <rect x="24" y="2" width="5" height="5" fill="#fff" stroke="#999" />
              </template>
              <template v-else-if="b.i === 'tablescan'">
                <rect x="2" y="1" width="23" height="24" fill="#fff" stroke="#4a90d9" />
                <rect x="2" y="1" width="23" height="5" fill="#3f86d0" />
                <path d="M9 11h13M9 15h10M9 19h8" stroke="#888" />
                <rect x="0" y="9" width="7" height="8" fill="#fff" stroke="#f08a24" stroke-width="1.5" />
                <circle cx="21" cy="20" r="4.5" fill="#fff" stroke="#f08a24" stroke-width="2" />
                <path d="M24 23l5 5" stroke="#f08a24" stroke-width="2.5" />
              </template>
              <template v-else-if="b.i === 'foundscan'">
                <path d="M12 2h7l2 2v11h-11z" fill="#cfe3f7" stroke="#4a90d9" />
                <path d="M10 15h13l5 6H3z" fill="#cfe3f7" stroke="#4a90d9" />
                <path d="M3 21h25v5H3z" fill="#9fc5ea" stroke="#4a90d9" />
                <path d="M21 15l8 6-4 1 2 5-5-6z" fill="#f4a868" />
              </template>
              <template v-else>
                <path d="M6 2v24M14 2v24M22 2v24M2 8h26M2 16h26M2 24h26" stroke="#5a9ad8" stroke-dasharray="2 1" />
                <path d="M13 12l14 14-3 3L10 15z" fill="#d8b080" stroke="#a06030" />
                <path d="M11 8l2 3 3 0-2 2 1 3-3-2-3 2 1-3-2-2 3 0z" fill="#f08a24" />
              </template>
            </svg>
            <div v-for="l in b.text" :key="l" class="big-t">{{ l }}</div>
            <i v-if="b.drop" class="caret drop"></i>
          </div>
          <div v-for="(c, k) in g.cols" :key="k" class="rcol" :style="{ width: c.w + 'px' }">
            <template v-if="c.icons">
              <svg v-for="n in c.icons" :key="n" class="col-ico" viewBox="0 0 16 16" v-html="icons[n]"></svg>
            </template>
            <div v-for="it in c.items || []" :key="it.t" class="ritem" :class="{ off: it.off }">
              <svg class="ico" viewBox="0 0 16 16" v-html="icons[it.i]"></svg>
              <span>{{ it.t }}</span>
              <i v-if="it.a" class="caret"></i>
            </div>
          </div>
        </div>
        <div class="rlabel" :class="{ low: g.low }">{{ g.label }}<i v-if="g.arrow" class="caret"></i></div>
      </div>
    </section>

    <div class="combo-bar">
      <div v-for="c in combos" :key="c" class="combo">
        <span>{{ c }}</span><i class="caret dark"></i>
      </div>
    </div>

    <main class="main">
      <aside class="panel nav">
        <div class="phead">×</div>
        <div class="ptitle">导航树</div>
        <div class="ptools nav-tools">
          <svg class="ico" viewBox="0 0 16 16" v-html="icons.sparkle"></svg>
          <div class="view-btns">
            <span class="view-btn"><svg class="ico" viewBox="0 0 16 16" v-html="icons.cellview"></svg></span>
            <span class="view-btn"><svg class="ico" viewBox="0 0 16 16" v-html="icons.formview"></svg></span>
          </div>
        </div>
        <div class="nav-tree">
          <template v-for="n in navTree" :key="n.t">
            <div class="nrow">
              <svg class="ico" viewBox="0 0 16 16" v-html="icons[n.open ? 'fopen' : 'fclosed']"></svg>
              <span>{{ n.t }}</span>
            </div>
            <div v-for="k in n.kids || []" :key="k.t" class="nrow kid">
              <div class="kid-in" :class="{ on: k.on }">
                <svg class="ico" viewBox="0 0 16 16" v-html="icons[k.i]"></svg>
                <span>{{ k.t }}</span>
              </div>
            </div>
          </template>
        </div>
      </aside>

      <div class="midcol">
        <section class="panel list">
          <div class="phead">×</div>
          <div class="ptitle">构件列表</div>
          <div class="ptools list-tools">
            <div v-for="t in listTools" :key="t.t" class="ltool" :style="{ width: t.w + 'px' }">
              <svg class="ico" viewBox="0 0 16 16" v-html="icons[t.i]"></svg>
              <span>{{ t.t }}</span>
              <i v-if="t.a" class="caret dark"></i>
            </div>
            <span class="more">▸▸</span>
          </div>
          <div class="list-search">
            <span>搜索构件...</span>
            <svg width="11" height="11" viewBox="0 0 16 16" v-html="icons.search"></svg>
          </div>
          <div class="list-tree">
            <div class="lrow l1"><i class="tri"></i><span>独立基础</span></div>
            <div class="lrow l2"><i class="tri"></i><span>DJ-1</span></div>
            <div class="lrow l3"><div class="lsel on">(顶)&nbsp;&nbsp;&nbsp;DJ-1-2</div></div>
            <div class="lrow l3"><div class="lsel">(底)&nbsp;&nbsp;&nbsp;DJ-1-1</div></div>
          </div>
        </section>

        <section class="panel prop">
          <div class="phead">×</div>
          <div class="ptabs">
            <div class="ptab on">属性列表</div>
            <div class="ptab">图层管理</div>
          </div>
          <div class="ptable-wrap">
            <div class="ptable">
              <div class="trow thead">
                <div class="c0"></div>
                <div class="c1">属性名称</div>
                <div class="c2 hl">属性值</div>
                <div class="c3">附加</div>
              </div>
              <div v-for="(p, k) in props" :key="p.n" class="trow">
                <div class="c0" :class="{ hl: p.cur }">{{ k + 1 }}</div>
                <div class="c1 name" :class="{ blue: p.blue, sec: p.sec }">
                  <span v-if="p.sec" class="plus">+</span>{{ p.n }}
                </div>
                <div class="c2 val" :class="{ cur: p.cur, ro: p.ro, sec: p.sec }">
                  <span v-if="p.bar" class="rebar">虫</span>{{ p.v }}
                </div>
                <div class="c3"><span v-if="p.c" class="chk"></span></div>
              </div>
            </div>
            <div class="pscroll"><div class="pthumb"></div></div>
          </div>
        </section>
      </div>

      <div class="splitter"><div class="split-mark"></div></div>

      <div class="canvas">
        <svg class="cad" viewBox="471 165 1449 845" width="1449" height="845">
          <defs>
            <pattern id="hatch" patternUnits="userSpaceOnUse" width="24" height="24">
              <path d="M-6 6L6 -6M0 24L24 0M-6 18L6 6M12 24L24 12M18 30L30 18M12 0L0 12" stroke="#d0d0d0" stroke-width="1" />
              <circle v-for="(s, k) in speckle" :key="k" :cx="s[0]" :cy="s[1]" r=".8" fill="#f4f4f4" />
            </pattern>
          </defs>

          <rect x="471" y="923" width="1449" height="87" fill="#666" />
          <path d="M471 923.5H1920" stroke="#aaa" />
          <rect x="978" y="923" width="186" height="87" fill="#444000" />
          <rect x="1726" y="872" width="194" height="138" fill="#444000" />
          <path d="M1726 872.5H1920" stroke="#8a8400" stroke-width="2" />
          <path v-for="(d, k) in hexLines" :key="k" :d="d" fill="none" stroke="#d8d8c8" />

          <rect x="471" y="970" width="576" height="32" fill="url(#hatch)" />
          <rect x="1094" y="970" width="826" height="36" fill="url(#hatch)" />
          <path d="M471 970H1047M471 1001.5H1047M1094 970H1920M1094 1005.5H1920" stroke="#f0f000" />
          <path d="M1726 933L1804 1010M1887 873L1920 906" stroke="#f0f000" />

          <rect x="939" y="533" width="265" height="266" fill="#c4dc74" stroke="#eee" />
          <rect x="992.5" y="587" width="157" height="157" fill="none" stroke="#f0f4e0" />
          <rect x="1047.5" y="642" width="47" height="47" fill="none" stroke="#fff" />

          <rect x="1688.5" y="548" width="240" height="235.5" fill="none" stroke="#eee" />
          <rect x="1738.5" y="595" width="190" height="141" fill="none" stroke="#eee" />
          <rect x="1789" y="642.5" width="106" height="46.5" fill="none" stroke="#d00000" />

          <line x1="497" y1="665.5" x2="1920" y2="665.5" stroke="#b00000" />
          <line x1="1071" y1="528" x2="1071" y2="799" stroke="#e0623a" stroke-width="2" />
          <line x1="1071" y1="799" x2="1071" y2="1010" stroke="#b80000" stroke-width="2" />

          <rect x="978.5" y="923.5" width="185" height="87" fill="none" stroke="#e04040" />
          <rect x="1047.5" y="962" width="47" height="50" fill="#444000" stroke="#e00000" />
          <path d="M978 923L1078 1010M1164 923L1062 1010" stroke="#e00000" />
          <path d="M1726 873L1857 1010M1826 1010L1920 912M471 994H1920" stroke="#e00000" />
          <rect x="1789" y="962" width="106" height="50" fill="none" stroke="#d00000" />
          <path d="M1726 967L1770 1010" stroke="#e00000" />

          <line
            v-for="(l, k) in lines"
            :key="'l' + k"
            :x1="l[0]"
            :y1="l[1]"
            :x2="l[2]"
            :y2="l[3]"
            :stroke="l[4]"
            :stroke-width="l[5]"
          />
          <path
            v-for="(t, k) in ticksUp"
            :key="'u' + k"
            :d="`M${t[0] - 9} ${t[1] + 9}L${t[0] + 9} ${t[1] - 9}`"
            stroke="#00d000"
          />
          <path
            v-for="(t, k) in ticksDown"
            :key="'d' + k"
            :d="`M${t[0] - 9} ${t[1] - 9}L${t[0] + 9} ${t[1] + 9}`"
            stroke="#00d000"
          />
          <path
            v-for="(t, k) in stars"
            :key="'s' + k"
            :d="`M${t[0]} ${t[1] - 12}V${t[1] + 12}M${t[0] - 12} ${t[1] + 9}L${t[0] + 12} ${t[1] - 9}`"
            stroke="#00d000"
          />
          <circle cx="1046" cy="288" r="47" fill="none" stroke="#00c000" />

          <g v-for="(h, k) in hexes" :key="'h' + k">
            <polygon :points="hexPoints(h[0], h[1])" fill="none" stroke="#007000" />
            <text
              class="cad-t hex-t"
              :x="h[0] - 12"
              :y="h[1] + 9"
              :font-size="25"
              textLength="24"
              lengthAdjust="spacingAndGlyphs"
            >{{ h[2] }}</text>
          </g>

          <text
            v-for="(t, k) in cadText"
            :key="'t' + k"
            class="cad-t"
            :x="t[1]"
            :y="t[2]"
            :font-size="t[4] / 0.727"
            :textLength="t[3]"
            lengthAdjust="spacingAndGlyphs"
            :transform="t[5] ? `rotate(${t[5]} ${t[1]} ${t[2]})` : null"
          >{{ t[0] }}</text>

          <rect x="517" y="940" width="7" height="20" fill="#00e000" />
          <path d="M520.5 930l6 13h-12z" fill="#00e000" />
          <rect x="524" y="956" width="18" height="8" fill="#f00000" />
          <path d="M551 960l-13-6v12z" fill="#f00000" />
          <circle cx="520.5" cy="960" r="5.5" fill="#0000b0" />
          <path d="M514 918l6 7 6-7M520 925v7" fill="none" stroke="#00e000" />
          <path d="M553 955l8 11M561 955l-8 11" stroke="#f00000" />
        </svg>

        <div class="float-bar">
          <svg class="fb-ico" viewBox="0 0 26 24">
            <defs>
              <radialGradient id="ball" cx=".4" cy=".35" r=".8"><stop offset="0" stop-color="#fff" /><stop offset="1" stop-color="#55637a" /></radialGradient>
            </defs>
            <circle cx="12" cy="13" r="9.5" fill="url(#ball)" />
            <path d="M2 19c6 1 15-5 20-13" fill="none" stroke="#3c4654" />
            <circle cx="21" cy="6" r="4" fill="url(#ball)" stroke="#777" />
          </svg>
          <svg class="fb-ico" viewBox="0 0 26 24">
            <path d="M2 6l4-4h18v16l-4 4H2z" fill="#7f8fa6" stroke="#3c4654" />
            <path d="M2 6h18v16M20 6l4-4" fill="none" stroke="#3c4654" />
            <text x="9" y="19" font-size="8" fill="#2c3644" font-family="Liberation Sans, sans-serif">3D</text>
          </svg>
          <svg class="fb-ico" viewBox="0 0 26 24">
            <path d="M2 6l4-4h18v16l-4 4H2z" fill="#cfe4fb" stroke="#3c4654" />
            <path d="M2 6h18v16M20 6l4-4M6 2v16h18M6 18l-4 4" fill="none" stroke="#3c4654" />
          </svg>
          <i class="fb-caret"></i>
          <svg class="fb-ico" viewBox="0 0 26 24">
            <path d="M2 6l4-4h18v16l-4 4H2z" fill="#7f8fa6" stroke="#3c4654" />
            <path d="M2 6h18v16M20 6l4-4" fill="none" stroke="#3c4654" />
          </svg>
          <i class="fb-caret"></i>
          <svg class="fb-ico" viewBox="0 0 26 24">
            <path d="M21 6a10 10 0 1 0 2 8" fill="none" stroke="#3c4654" stroke-width="2" />
            <path d="M16 7h8V1z" fill="#3c4654" />
          </svg>
          <i class="fb-caret"></i>
          <div class="fb-sep"></div>
          <svg class="fb-ico" viewBox="0 0 26 24">
            <path d="M2 3l2-2h20v21H2z" fill="#7f8fa6" stroke="#3c4654" />
            <path d="M2 5h22M13 5v17M5 8h3M5 12h3M5 16h3M16 8h3M16 12h3M16 16h3M9 8h2M9 12h2M9 16h2M20 8h2M20 12h2M20 16h2" stroke="#2c3644" />
          </svg>
        </div>
      </div>
    </main>

    <footer class="status">
      <span v-for="(s, k) in stats" :key="k" class="stat" :style="{ width: s.w + 'px' }">{{ s.t }}</span>
      <span
        v-for="b in statBtns"
        :key="b.i"
        class="sbtn"
        :class="{ on: b.on, off: b.off }"
        :style="{ width: b.w + 'px', marginRight: b.mr + 'px' }"
      >
        <svg class="ico" viewBox="0 0 16 16" v-html="icons[b.i]"></svg>
        <i v-if="b.a" class="caret dark"></i>
      </span>
      <span class="sbtn txt w72">跨图层选择</span>
      <span class="sbtn txt w61">折线选择</span>
      <span class="hint">按鼠标左键指定第一个角点，或拾取构件图元</span>
      <span class="fps">250 FPS</span>
    </footer>
    <div class="taskbar"><div class="tb-grey"></div><span class="clock">10:50</span></div>
  </div>
</template>

<style>
body {
  margin: 0;
  overflow: hidden;
}
</style>

<style scoped>
.app {
  width: 1920px;
  height: 1048px;
  display: flex;
  flex-direction: column;
  overflow: hidden;
  background: #fff;
  color: #333;
  font-family: "Open Sans", "Noto Sans CJK SC", sans-serif;
  font-size: 12px;
  line-height: 1;
}
.ico {
  width: 16px;
  height: 16px;
  flex: none;
}
.caret {
  display: inline-block;
  width: 0;
  height: 0;
  margin-left: 5px;
  border-left: 3px solid transparent;
  border-right: 3px solid transparent;
  border-top: 4px solid #666;
  vertical-align: middle;
}
.caret.dark {
  border-top-color: #444;
}
.caret.lite {
  border-top-color: #aaa;
  margin-left: 3px;
}

.ritem span,
.nrow span,
.kid-in span,
.lrow span,
.lsel,
.ltool span,
.combo span,
.list-search span,
.big-t,
.stat,
.sbtn.txt,
.hint,
.fps,
.ptab,
.ptitle,
.trow .name,
.trow .val,
.trow .c0,
.thead .c1,
.thead .c2,
.thead .c3 {
  padding-top: 2px;
}
.rlabel {
  padding-top: 2px;
}

/* title + tabs */
.head {
  height: 41px;
  flex: none;
  display: flex;
  border-bottom: 1px solid #d5d5d5;
  box-sizing: border-box;
}
.logo-cell {
  width: 50px;
  flex: none;
  padding: 8px 0 0 9px;
  box-sizing: border-box;
}
.logo {
  width: 29px;
  height: 28px;
  border-radius: 5px;
  background: linear-gradient(#6fc2f7, #d6eefc);
  display: flex;
  justify-content: center;
  align-items: center;
}
.logo-t {
  color: #0c7fd4;
  font-family: "Liberation Sans", sans-serif;
  font-size: 30px;
  font-weight: bold;
}
.head-main {
  flex: 1;
  display: flex;
  flex-direction: column;
}
.qa-row {
  height: 22px;
  display: flex;
  align-items: center;
}
.qa {
  display: flex;
  align-items: center;
  width: 308px;
}
.qa-btn,
.qa-arrow {
  display: flex;
  justify-content: center;
  flex: none;
}
.qa-arrow .caret {
  margin-left: 0;
}
.title {
  margin-left: 382px;
  white-space: nowrap;
  letter-spacing: 0.3px;
}
.winctl {
  margin-left: auto;
  display: flex;
  gap: 22px;
  padding-right: 13px;
  margin-top: -3px;
}
.tab-row {
  flex: 1;
  display: flex;
  min-height: 0;
}
.tabs {
  display: flex;
}
.tab {
  padding: 0 13px;
  display: flex;
  align-items: center;
}
.tab.on {
  background: #5aa9f2;
  color: #fff;
}
.head-right {
  margin-left: auto;
  display: flex;
  align-items: center;
  padding-bottom: 2px;
}
.ask {
  width: 244px;
  height: 17px;
  box-sizing: border-box;
  border: 1px solid #c4c4c4;
  display: flex;
  align-items: center;
  justify-content: space-between;
  padding: 0 6px 0 3px;
  color: #c4c4c4;
  font-size: 11.5px;
  margin-right: 10px;
}
.hr-ico {
  flex: none;
  margin-right: 8px;
}
.help {
  color: #888;
  font-family: "Liberation Sans", sans-serif;
  font-size: 15px;
  font-weight: bold;
  width: 26px;
  margin-left: 1px;
}

/* ribbon */
.ribbon {
  height: 97px;
  flex: none;
  display: flex;
  background: linear-gradient(#fff 50%, #e9ebed);
  border-bottom: 1px solid #8f9295;
  box-sizing: border-box;
}
.rgroup {
  flex: none;
  box-sizing: border-box;
  border-right: 1px solid #d4d6d8;
  display: flex;
  flex-direction: column;
  margin: 3px 0 1px;
}
.rbody {
  height: 72px;
  display: flex;
}
.rcol {
  flex: none;
  display: flex;
  flex-direction: column;
}
.ritem {
  height: 23px;
  display: flex;
  align-items: center;
  gap: 3px;
  white-space: nowrap;
}
.ritem .caret {
  margin-left: 5px;
}
.ritem.off,
.big.off {
  color: #bbb;
}
.col-ico {
  width: 16px;
  height: 16px;
  margin-bottom: 8px;
}
.big {
  flex: none;
  display: flex;
  flex-direction: column;
  align-items: center;
  padding-top: 4px;
  box-sizing: border-box;
  white-space: nowrap;
}
.big.active {
  background: #c6d6ea;
  height: 67px;
  margin-top: 2px;
  padding-top: 2px;
}
.big-ico {
  width: 30px;
  height: 30px;
  margin-bottom: 3px;
  flex: none;
}
.big-t {
  height: 18px;
  line-height: 18px;
  box-sizing: content-box;
  padding-top: 0;
  margin-top: 1px;
  margin-bottom: -1px;
}
.caret.drop {
  margin: 4px 0 0;
}
.rlabel {
  flex: 1;
  display: flex;
  justify-content: center;
  align-items: center;
}
.rlabel.low {
  padding-top: 5px;
}

/* combo row */
.combo-bar {
  height: 27px;
  flex: none;
  box-sizing: border-box;
  background: #c8cbcf;
  border-bottom: 1px solid #8f9295;
  display: flex;
  align-items: center;
  gap: 3px;
  padding: 1px 0 0 2px;
}
.combo {
  width: 98px;
  height: 22px;
  box-sizing: border-box;
  background: #fff;
  display: flex;
  justify-content: space-between;
  align-items: center;
  padding: 0 5px 0 3px;
}
.combo .caret {
  margin: 0;
}

/* main */
.main {
  flex: 1;
  display: flex;
  min-height: 0;
  background: #fff;
}
.panel {
  box-sizing: border-box;
  display: flex;
  flex-direction: column;
  border: 1px solid #c5c6c9;
  border-top: 0;
  overflow: hidden;
}
.nav {
  width: 175px;
  flex: none;
  margin-top: 1px;
}
.phead {
  height: 11px;
  flex: none;
  background: #d3d4d8;
  color: #777;
  font-size: 10px;
  line-height: 11px;
  text-align: right;
  padding-right: 5px;
  font-family: "Liberation Sans", sans-serif;
}
.ptitle {
  height: 23px;
  flex: none;
  box-sizing: border-box;
  background: #f1f1f1;
  border-bottom: 1px solid #c5c6c9;
  color: #888;
  display: flex;
  align-items: center;
  padding-left: 8px;
}
.ptools {
  height: 27px;
  flex: none;
  box-sizing: border-box;
  background: #f4f4f4;
  border-bottom: 1px solid #ddd;
  display: flex;
  align-items: center;
}
.nav-tools {
  padding: 0 0 0 6px;
  justify-content: space-between;
}
.nav-tools > .ico {
  width: 14px;
  height: 14px;
}
.view-btns {
  display: flex;
  gap: 4px;
  padding-right: 1px;
}
.view-btn {
  width: 24px;
  height: 22px;
  box-sizing: border-box;
  border: 1px solid #8ec1f0;
  border-radius: 3px;
  background: #eaf4fd;
  display: flex;
  justify-content: center;
  align-items: center;
}
.nav-tree {
  flex: 1;
  padding-top: 3px;
  overflow: hidden;
}
.nrow {
  height: 24px;
  display: flex;
  align-items: center;
  gap: 5px;
  padding-left: 3px;
}
.nrow.kid {
  padding-left: 41px;
}
.kid-in {
  display: flex;
  align-items: center;
  gap: 4px;
  height: 21px;
  padding-left: 4px;
  width: 97px;
  box-sizing: border-box;
  white-space: nowrap;
}
.kid-in.on {
  background: #bcd4ee;
}
.midcol {
  width: 288px;
  flex: none;
  margin-left: 4px;
  margin-top: 1px;
  display: flex;
  flex-direction: column;
  gap: 4px;
}
.list {
  height: 421px;
  flex: none;
  border-color: #aaa;
}
.list-tools {
  padding-left: 6px;
}
.ltool {
  display: flex;
  align-items: center;
  gap: 3px;
  flex: none;
}
.ltool .caret {
  margin-left: 5px;
}
.more {
  margin-left: auto;
  padding-right: 2px;
  font-size: 9px;
  color: #555;
}
.list-search {
  height: 20px;
  flex: none;
  box-sizing: border-box;
  border-bottom: 1px solid #c5c6c9;
  display: flex;
  align-items: center;
  justify-content: space-between;
  padding: 0 8px 0 2px;
  color: #999;
}
.list-tree {
  flex: 1;
  background: #fff;
}
.lrow {
  height: 24px;
  display: flex;
  align-items: center;
}
.lrow.l1 {
  padding-left: 10px;
  margin-top: 2px;
}
.lrow.l2 {
  padding-left: 31px;
}
.lrow.l3 {
  padding-left: 60px;
}
.tri {
  width: 0;
  height: 0;
  margin-right: 7px;
  border-left: 6px solid transparent;
  border-bottom: 6px solid #444;
}
.lsel {
  width: 81px;
  height: 21px;
  box-sizing: border-box;
  padding-left: 10px;
  display: flex;
  align-items: center;
  white-space: nowrap;
  letter-spacing: 0.3px;
}
.lsel.on {
  background: #b3cdec;
}
.prop {
  flex: 1;
  min-height: 0;
}
.ptabs {
  height: 24px;
  flex: none;
  display: flex;
  background: #f1f1f1;
  border-bottom: 1px solid #c5c6c9;
}
.ptab {
  width: 64px;
  display: flex;
  justify-content: center;
  align-items: center;
  background: #e3e3e3;
  color: #999;
  margin-right: 1px;
}
.ptab.on {
  background: #f1f1f1;
  color: #333;
}
.ptable-wrap {
  flex: 1;
  display: flex;
  min-height: 0;
  overflow: hidden;
}
.ptable {
  width: 271px;
  flex: none;
}
.trow {
  height: 21px;
  display: flex;
  box-sizing: border-box;
  border-bottom: 1px solid #c8c8c8;
}
.trow.thead {
  height: 20px;
}
.trow > div {
  box-sizing: border-box;
  border-right: 1px solid #c8c8c8;
  display: flex;
  align-items: center;
  white-space: nowrap;
  overflow: hidden;
}
.thead {
  background: #f1f1f1;
}
.thead .c1,
.thead .c2,
.thead .c3 {
  justify-content: center;
}
.c0 {
  width: 22px;
  justify-content: center;
  background: #f1f1f1;
  font-size: 13px;
}
.c1 {
  width: 100px;
}
.c2 {
  width: 108px;
}
.c3 {
  width: 41px;
  justify-content: center;
}
.hl {
  background: #7ab8f5;
  color: #fff;
  font-weight: bold;
}
.name {
  padding-left: 3px;
}
.val {
  padding-left: 4px;
}
.blue {
  color: #2b6fe6;
}
.name.sec,
.val.sec {
  background: #eee;
}
.val.ro {
  background: #e8e8e8;
  color: #999;
}
.trow .val.cur {
  border: 2px solid #777;
  padding: 0 0 0 3px;
}
.rebar {
  font-size: 9px;
  margin-top: -4px;
}
.plus {
  width: 11px;
  height: 11px;
  box-sizing: border-box;
  border: 1px solid #777;
  border-radius: 2px;
  display: flex;
  justify-content: center;
  align-items: center;
  font-size: 10px;
  margin-right: 6px;
  flex: none;
}
.chk {
  width: 13px;
  height: 13px;
  box-sizing: border-box;
  border: 1px solid #777;
  border-radius: 2px;
}
.pscroll {
  flex: 1;
  padding: 14px 4px 0 5px;
}
.pthumb {
  height: 317px;
  background: #c8c8c8;
  border-radius: 4px;
}
.splitter {
  width: 4px;
  flex: none;
  background: #eee;
  padding-top: 374px;
  box-sizing: border-box;
}
.split-mark {
  width: 3px;
  height: 100px;
  background: #5a6570;
}
.canvas {
  flex: 1;
  min-width: 0;
  position: relative;
  background: #000;
  overflow: hidden;
}
.cad {
  display: block;
}
.cad-t {
  font-family: Inter, "Noto Sans CJK SC", sans-serif;
  font-weight: 100;
  fill: #ececec;
}
.hex-t {
  fill: #fff;
  stroke: #fff;
  stroke-width: 0.3;
}
.float-bar {
  position: absolute;
  top: 1px;
  right: 0;
  width: 33px;
  height: 226px;
  box-sizing: border-box;
  background: #9a9da2;
  border-radius: 3px 0 0 3px;
  display: flex;
  flex-direction: column;
  align-items: center;
  padding-top: 12px;
}
.fb-ico {
  width: 26px;
  height: 24px;
  flex: none;
  margin-bottom: 4px;
}
.fb-caret {
  width: 0;
  height: 0;
  margin: 1px 0 6px;
  border-left: 4px solid transparent;
  border-right: 4px solid transparent;
  border-top: 4px solid #3c4654;
}
.fb-sep {
  width: 26px;
  height: 1px;
  background: #6a6d72;
  margin-bottom: 5px;
}

/* status */
.status {
  height: 30px;
  flex: none;
  box-sizing: border-box;
  background: #dfe0e2;
  display: flex;
  align-items: center;
  padding-left: 2px;
  color: #555;
  white-space: nowrap;
}
.stat {
  flex: none;
  word-spacing: 3px;
}
.sbtn {
  height: 25px;
  flex: none;
  box-sizing: border-box;
  border: 1px solid #999;
  background: #c8c9cc;
  display: flex;
  align-items: center;
  justify-content: center;
  margin-right: 3px;
  color: #444;
}
.sbtn .caret {
  margin-left: 2px;
}
.sbtn.on {
  background: #fff;
  border-color: #3f8fe0;
}
.sbtn.off {
  background: #d4d5d7;
  border-color: #bbb;
}
.w72 {
  width: 72px;
  margin-right: 4px;
}
.w61 {
  width: 61px;
}
.hint {
  margin-left: 2px;
  color: #333;
}
.fps {
  margin-left: auto;
  padding-right: 36px;
  color: #444;
}
.taskbar {
  height: 8px;
  flex: none;
  background: #101a10;
  position: relative;
  overflow: hidden;
}
.tb-grey {
  position: absolute;
  left: 1141px;
  width: 139px;
  top: 0;
  bottom: 0;
  background: #4a4a4a;
}
.clock {
  position: absolute;
  left: 1816px;
  top: 4px;
  color: #ddd;
}
</style>
